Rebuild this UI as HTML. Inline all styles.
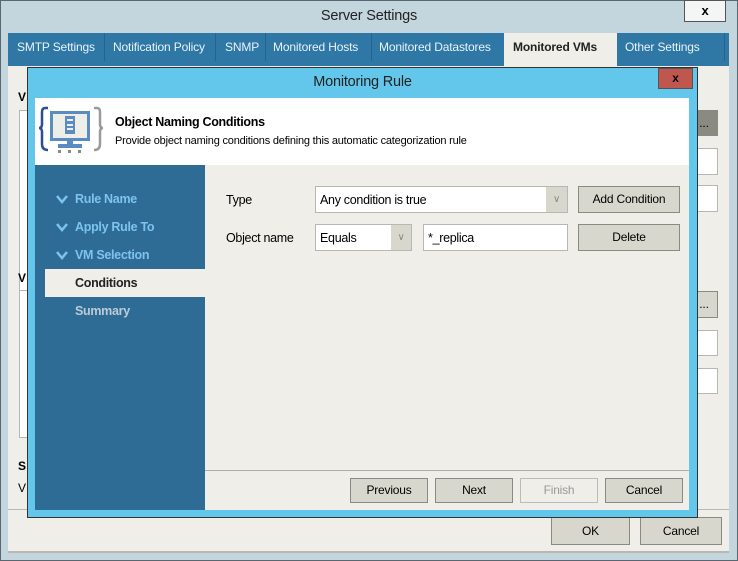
<!DOCTYPE html>
<html><head><style>
*{box-sizing:border-box;margin:0;padding:0}
body{width:738px;height:561px;position:relative;background:#c4d6dd;font-family:"Liberation Sans",sans-serif;font-size:12px;color:#000;overflow:hidden;letter-spacing:-0.2px}
.a{position:absolute}
.btn{position:absolute;background:#d8d7cd;border:1px solid #8a8a80;text-align:center;font-size:12px;color:#000}
.box{position:absolute;background:#fff;border:1px solid #b8b8b0}
.nav{position:absolute;left:75px;font-weight:bold;font-size:12.5px;color:#7cc3ee;letter-spacing:-0.3px}
.chk{position:absolute;left:56px}
</style></head><body>
<div class="a" style="left:0;top:0;width:738px;height:561px;border:1px solid #5a6670"></div>
<div class="a" style="left:0;top:0;width:738px;height:33px;text-align:center;line-height:32px;font-size:14.5px;color:#222">Server Settings</div>
<div class="a" style="left:684px;top:0;width:42px;height:22px;background:#f4f6f6;border:1px solid #555;text-align:center;font-weight:bold;font-size:13px;line-height:20px">x</div>
<div class="a" style="left:8px;top:33px;width:721px;height:33px;background:#2f78a6"></div>
<div class="a" style="left:8px;top:66px;width:721px;height:487px;background:#efeee8;border-bottom:2px solid #b8b8b0"></div>
<div class="a" style="top:33px;left:8px;height:33px;font-size:12px;color:#e8f2f8;line-height:28px;letter-spacing:-0.15px">
<span class="a" style="left:1px;width:96px;white-space:nowrap;border-right:1px solid #26628a;padding-left:8px">SMTP Settings</span>
<span class="a" style="left:97px;width:111px;white-space:nowrap;border-right:1px solid #26628a;padding-left:8px">Notification Policy</span>
<span class="a" style="left:208px;width:50px;white-space:nowrap;border-right:1px solid #26628a;padding-left:9px">SNMP</span>
<span class="a" style="left:258px;width:106px;white-space:nowrap;border-right:1px solid #26628a;padding-left:7px">Monitored Hosts</span>
<span class="a" style="left:364px;width:132px;white-space:nowrap;padding-left:7px">Monitored Datastores</span>
<span class="a" style="left:496px;width:113px;height:33px;white-space:nowrap;background:#efeee8;color:#222;font-weight:bold;padding-left:9px">Monitored VMs</span>
<span class="a" style="left:609px;width:108px;white-space:nowrap;border-right:1px solid #26628a;padding-left:8px">Other Settings</span>
</div>
<div class="a" style="left:18px;top:90px;font-weight:bold">V</div>
<div class="box" style="left:19px;top:110px;width:12px;height:186px"></div>
<div class="btn" style="left:690px;top:110px;width:28px;height:26px;background:#8a8a80;line-height:24px">...</div>
<div class="box" style="left:690px;top:148px;width:28px;height:27px"></div>
<div class="box" style="left:690px;top:185px;width:28px;height:27px"></div>
<div class="a" style="left:18px;top:271px;font-weight:bold">V</div>
<div class="box" style="left:19px;top:290px;width:12px;height:148px"></div>
<div class="btn" style="left:690px;top:291px;width:28px;height:27px;line-height:24px">...</div>
<div class="box" style="left:690px;top:330px;width:28px;height:26px"></div>
<div class="box" style="left:690px;top:368px;width:28px;height:26px"></div>
<div class="a" style="left:18px;top:459px;font-weight:bold">S</div>
<div class="a" style="left:18px;top:481px">V</div>
<div class="a" style="left:8px;top:509px;width:721px;height:1px;background:#b8b8b0"></div>
<div class="btn" style="left:551px;top:517px;width:79px;height:28px;line-height:26px">OK</div>
<div class="btn" style="left:640px;top:517px;width:82px;height:28px;line-height:26px">Cancel</div>

<div class="a" style="left:27px;top:67px;width:671px;height:451px;background:#62c7ea;border:1px solid #333"></div>
<div class="a" style="left:27px;top:68px;width:671px;height:30px;text-align:center;line-height:29px;font-size:14.5px;color:#222">Monitoring Rule</div>
<div class="a" style="left:658px;top:68px;width:35px;height:21px;background:#c0574f;border:1px solid #555;text-align:center;font-weight:bold;line-height:19px;font-size:12px">x</div>
<div class="a" style="left:35px;top:98px;width:654px;height:67px;background:#fff"></div>
<svg class="a" style="left:38px;top:104px" width="66" height="50" viewBox="0 0 66 50">
<path d="M10 4 H7 Q4 4 4 8 V20 Q4 24 1 24 Q4 24 4 28 V40 Q4 46 10 46" fill="none" stroke="#2d4f8e" stroke-width="2.5"/>
<path d="M56 4 H59 Q62 4 62 8 V20 Q62 24 65 24 Q62 24 62 28 V40 Q62 46 56 46" fill="none" stroke="#9a9a9a" stroke-width="2.5"/>
<rect x="12" y="7" width="40" height="30" fill="#5b8cc0"/>
<rect x="15" y="10" width="34" height="24" fill="#eeeee8"/>
<rect x="27" y="12" width="10" height="18" fill="#5b8cc0"/>
<rect x="29" y="15" width="6" height="2" fill="#eee"/><rect x="29" y="20" width="6" height="2" fill="#eee"/><rect x="29" y="24" width="6" height="2" fill="#eee"/>
<rect x="29" y="37" width="6" height="4" fill="#5b8cc0"/>
<rect x="20" y="40" width="24" height="4" fill="#5b8cc0"/>
<rect x="20" y="46" width="3" height="3" fill="#888"/><rect x="30" y="46" width="3" height="3" fill="#888"/><rect x="40" y="46" width="3" height="3" fill="#888"/>
</svg>
<div class="a" style="left:115px;top:115px;font-weight:bold;font-size:12.5px;letter-spacing:-0.3px">Object Naming Conditions</div>
<div class="a" style="left:115px;top:135px;font-size:11px;letter-spacing:-0.2px">Provide object naming conditions defining this automatic categorization rule</div>
<div class="a" style="left:35px;top:165px;width:170px;height:345px;background:#2e6c96"></div>
<div class="a" style="left:205px;top:165px;width:484px;height:345px;background:#efeee8"></div>
<svg class="chk" style="top:194px" width="12" height="10"><path d="M1 2 L6 8 L11 2" fill="none" stroke="#7cc3ee" stroke-width="2.5"/></svg>
<div class="nav" style="top:192px">Rule Name</div>
<svg class="chk" style="top:222px" width="12" height="10"><path d="M1 2 L6 8 L11 2" fill="none" stroke="#7cc3ee" stroke-width="2.5"/></svg>
<div class="nav" style="top:220px">Apply Rule To</div>
<svg class="chk" style="top:250px" width="12" height="10"><path d="M1 2 L6 8 L11 2" fill="none" stroke="#7cc3ee" stroke-width="2.5"/></svg>
<div class="nav" style="top:248px">VM Selection</div>
<div class="a" style="left:45px;top:269px;width:160px;height:28px;background:#efeee8"></div>
<div class="nav" style="top:276px;color:#222">Conditions</div>
<div class="nav" style="top:304px;color:#bccbd6">Summary</div>
<div class="a" style="left:226px;top:193px;font-size:12.5px;letter-spacing:-0.3px">Type</div>
<div class="box" style="left:315px;top:186px;width:253px;height:27px;padding:6px 4px;font-size:12.5px;letter-spacing:-0.3px">Any condition is true</div>
<div class="a" style="left:546px;top:187px;width:21px;height:25px;background:#d8d7cd;color:#888;text-align:center;line-height:25px;font-size:10px">∨</div>
<div class="btn" style="left:578px;top:186px;width:102px;height:27px;line-height:25px">Add Condition</div>
<div class="a" style="left:226px;top:231px;font-size:12.5px;letter-spacing:-0.3px">Object name</div>
<div class="box" style="left:315px;top:224px;width:97px;height:27px;padding:6px 4px;font-size:12.5px;letter-spacing:-0.3px">Equals</div>
<div class="a" style="left:391px;top:225px;width:20px;height:25px;background:#d8d7cd;color:#888;text-align:center;line-height:25px;font-size:10px">∨</div>
<div class="box" style="left:423px;top:224px;width:145px;height:27px;padding:6px 4px;font-size:12.5px;letter-spacing:-0.3px">*_replica</div>
<div class="btn" style="left:578px;top:224px;width:102px;height:27px;line-height:25px">Delete</div>
<div class="a" style="left:205px;top:470px;width:484px;height:1px;background:#b0b0a8"></div>
<div class="btn" style="left:350px;top:478px;width:78px;height:25px;line-height:23px">Previous</div>
<div class="btn" style="left:435px;top:478px;width:78px;height:25px;line-height:23px">Next</div>
<div class="btn" style="left:520px;top:478px;width:78px;height:25px;line-height:23px;background:#efeee8;border-color:#bbb;color:#999">Finish</div>
<div class="btn" style="left:605px;top:478px;width:78px;height:25px;line-height:23px">Cancel</div>
</body></html>
